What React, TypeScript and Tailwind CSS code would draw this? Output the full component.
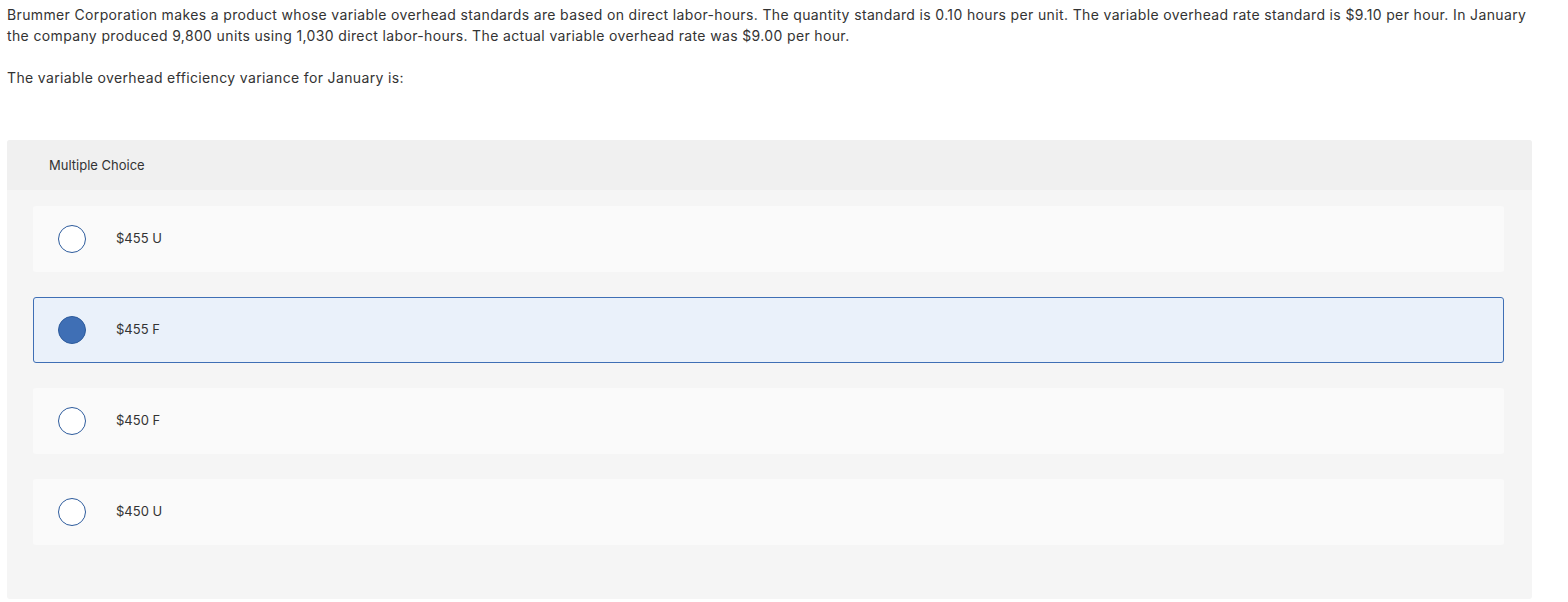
import React from "react";

const options = [
  { label: "$455 U", selected: false },
  { label: "$455 F", selected: true },
  { label: "$450 F", selected: false },
  { label: "$450 U", selected: false },
];

export default function App() {
  return (
    <div
      className="w-[1568px] h-[602px] bg-white text-[#333] overflow-hidden"
      style={{ fontFamily: "Inter, Arial, sans-serif" }}
    >
      <div className="pl-[7px] pr-[30px] pt-[4px] text-[14px] leading-[21px] tracking-[0.36px]">
        <p>
          Brummer Corporation makes a product whose variable overhead standards are based on direct labor-hours. The quantity standard is 0.10 hours per unit. The variable overhead rate standard is $9.10 per hour. In January the company produced 9,800 units using 1,030 direct labor-hours. The actual variable overhead rate was $9.00 per hour.
        </p>
        <p className="mt-[21px]">The variable overhead efficiency variance for January is:</p>
      </div>
      <div className="ml-[7px] mt-[52px] w-[1525px] h-[459px] bg-[#f5f5f5] rounded-[3px] overflow-hidden">
        <div className="h-[50px] bg-[#f0f0f0] flex items-center pl-[42px] pt-[2px] text-[13px] text-[#333]">
          Multiple Choice
        </div>
        <div className="flex flex-col gap-[25px] pt-[16px] pl-[26px] pr-[28px]">
          {options.map((o) => (
            <div
              key={o.label}
              className={
                o.selected
                  ? "h-[66px] rounded-[3px] border border-[#3f6fb5] bg-[#eaf1fa] flex items-center"
                  : "h-[66px] rounded-[3px] border border-transparent bg-[#fafafa] flex items-center"
              }
            >
              <div
                className={
                  o.selected
                    ? "ml-[24px] w-[28px] h-[28px] rounded-full bg-[#3f6fb5] border border-[#2d5b9c]"
                    : "ml-[24px] w-[28px] h-[28px] rounded-full bg-white border border-[#2d5b9c]"
                }
              />
              <span className="ml-[30px] text-[13px] text-[#333]">{o.label}</span>
            </div>
          ))}
        </div>
      </div>
    </div>
  );
}
